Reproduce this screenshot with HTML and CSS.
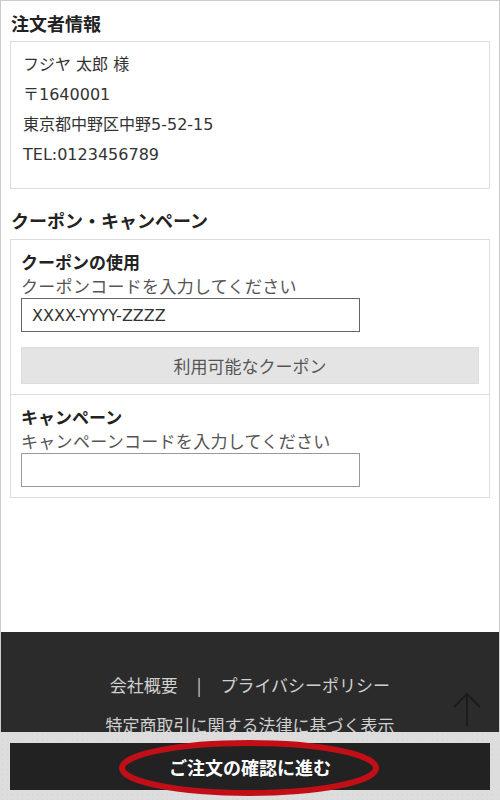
FILE: index.html
```html
<!DOCTYPE html>
<html lang="ja">
<head>
<meta charset="utf-8">
<title>注文者情報</title>
<link rel="stylesheet" href="styles.css">
</head>
<body>
<div class="page">
  <main class="main">
    <h2 class="sec-title">注文者情報</h2>
    <div class="box info">
      <p>フジヤ 太郎 様</p>
      <p>〒1640001</p>
      <p>東京都中野区中野5-52-15</p>
      <p>TEL:0123456789</p>
    </div>

    <h2 class="sec-title sec-title2">クーポン・キャンペーン</h2>
    <div class="box">
      <section class="sub">
        <h3 class="sub-title">クーポンの使用</h3>
        <p class="desc">クーポンコードを入力してください</p>
        <input class="field field-dark" type="text" value="XXXX-YYYY-ZZZZ">
        <button class="coupon-btn" type="button">利用可能なクーポン</button>
      </section>
      <section class="sub sub-sep">
        <h3 class="sub-title">キャンペーン</h3>
        <p class="desc">キャンペーンコードを入力してください</p>
        <input class="field field-light" type="text" value="">
      </section>
    </div>
  </main>

  <footer class="footer">
    <div class="foot-row"><a href="#">会社概要</a><span class="bar">|</span><a href="#">プライバシーポリシー</a></div>
    <div class="foot-row"><a href="#">特定商取引に関する法律に基づく表示</a></div>
  </footer>
</div>

<svg class="to-top" width="34" height="40" viewBox="0 0 34 40" aria-hidden="true">
  <path d="M17 36 V4 M4 17 L17 4 L30 17" fill="none" stroke="#1c1c1c" stroke-width="2"/>
</svg>

<div class="cta-bar">
  <button class="cta" type="button">ご注文の確認に進む</button>
</div>

<svg class="mark" width="270" height="64" viewBox="0 0 270 64" aria-hidden="true">
  <ellipse cx="135" cy="32" rx="127" ry="25" fill="none" stroke="#c20f17" stroke-width="6"/>
</svg>
</body>
</html>
```

FILE: styles.css
```css
* { box-sizing: border-box; }
html, body { margin: 0; padding: 0; }
body {
  font-family: "DejaVu Sans", "Noto Sans CJK JP", sans-serif;
  color: #333;
  background: #fff;
}
.page {
  border: 1px solid #cccccc;
  border-bottom: 0;
}
.main {
  padding: 9px 9px 134px;
}
.sec-title {
  margin: 0 0 5px 1px;
  font-family: "Noto Sans CJK JP", sans-serif;
  font-size: 18px;
  line-height: 26px;
  font-weight: 700;
  color: #222;
}
.sec-title2 { margin-top: 18px; margin-bottom: 6px; }
.box {
  border: 1px solid #dddddd;
}
.info {
  padding: 8px 12px 18px;
}
.info p {
  margin: 0;
  font-size: 16px;
  line-height: 30px;
  color: #333;
}
.sub {
  padding: 10px;
}
.sub-sep { border-top: 1px solid #dddddd; }
.sub-title {
  margin: 0;
  font-family: "Noto Sans CJK JP", sans-serif;
  font-size: 17px;
  line-height: 24px;
  font-weight: 700;
  color: #222;
}
.desc {
  margin: 0;
  font-family: "Noto Sans CJK JP", sans-serif;
  font-size: 17px;
  letter-spacing: 0.3px;
  line-height: 24px;
  color: #555;
}
.field {
  display: block;
  width: 339px;
  height: 34px;
  margin: 0;
  padding: 0 10px;
  font-family: "DejaVu Sans", sans-serif;
  font-size: 16px;
  color: #333;
  background: #fff;
  border-radius: 0;
  outline: none;
}
.field-dark { border: 1px solid #666; }
.field-light { border: 1px solid #999; }
.coupon-btn {
  display: block;
  width: 100%;
  height: 37px;
  margin-top: 15px;
  padding: 0;
  background: #e4e4e4;
  border: 1px solid #dddddd;
  border-radius: 0;
  font-family: "Noto Sans CJK JP", sans-serif;
  font-size: 17px;
  color: #555;
}
.footer {
  background: #2b2b2b;
  padding: 33px 0 55px;
}
.foot-row {
  text-align: center;
  line-height: 40px;
  font-family: "Noto Sans CJK JP", sans-serif;
  font-size: 17px;
}
.foot-row a {
  color: #d0d0d0;
  text-decoration: none;
}
.bar {
  color: #d0d0d0;
  margin: 0 19px;
}
.to-top {
  position: absolute;
  left: 450px;
  top: 690px;
}
.cta-bar {
  position: fixed;
  left: 0;
  right: 0;
  bottom: 0;
  height: 68px;
  padding: 11px 10px 10px;
  background-color: #dddddd;
  background-image: radial-gradient(circle, #d2d2d2 0.8px, transparent 1px);
  background-size: 5px 5px;
}
.cta {
  display: block;
  width: 100%;
  height: 47px;
  padding: 0;
  border: 0;
  border-radius: 0;
  background: #222222;
  color: #fff;
  font-family: "Noto Sans CJK JP", sans-serif;
  font-size: 18px;
  font-weight: 700;
}
.mark {
  position: fixed;
  left: 114px;
  top: 736px;
}
```
